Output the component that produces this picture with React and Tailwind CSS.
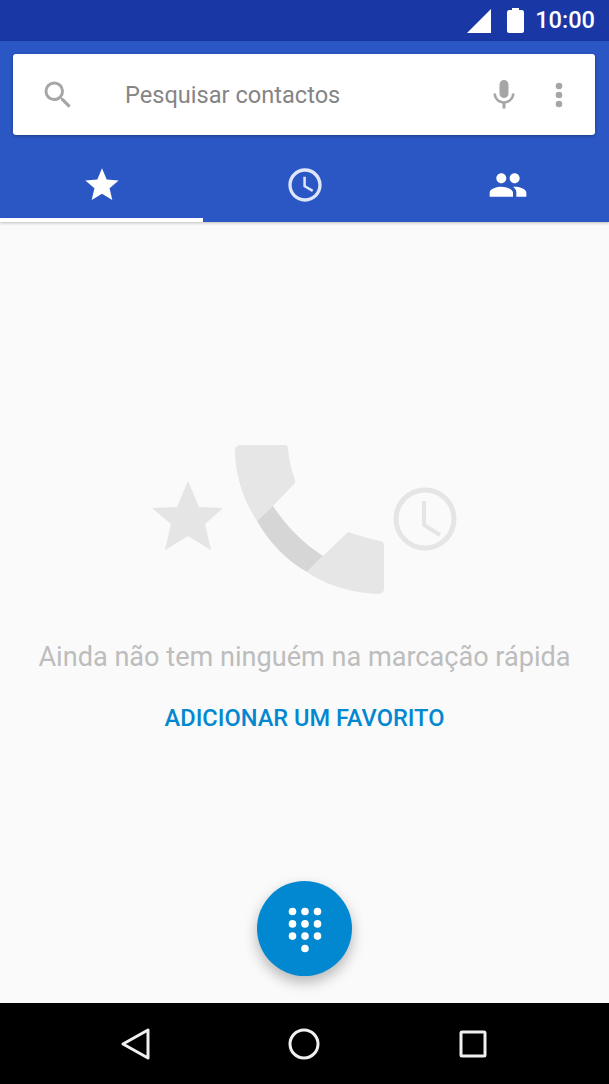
const font = { fontFamily: 'Roboto, sans-serif' };

function SearchBar() {
  return (
    <div className="ml-[13px] mr-[14px] mt-[13px] flex h-[81px] items-center rounded-[3px] bg-white shadow-[0_1px_3px_rgba(0,0,0,0.35)]">
      <svg className="ml-[27px] h-[36px] w-[36px] shrink-0" viewBox="0 0 24 24" fill="#a6a6a6">
        <path d="M15.5 14h-.79l-.28-.27A6.47 6.47 0 0 0 16 9.5 6.5 6.5 0 1 0 9.5 16c1.61 0 3.09-.59 4.23-1.57l.27.28v.79l5 4.99L20.49 19l-4.99-5zm-6 0C7.01 14 5 11.99 5 9.5S7.01 5 9.5 5 14 7.01 14 9.5 11.99 14 9.5 14z" />
      </svg>
      <span className="ml-[49px] pt-[3px] text-[23.6px] leading-none text-[#858585]">Pesquisar contactos</span>
      <svg className="ml-auto h-[36px] w-[36px] shrink-0" viewBox="0 0 24 24" fill="#a6a6a6">
        <path d="M12 14c1.66 0 2.99-1.34 2.99-3L15 5c0-1.66-1.34-3-3-3S9 3.34 9 5v6c0 1.66 1.34 3 3 3zm5.3-3c0 3-2.54 5.1-5.3 5.1S6.7 14 6.7 11H5c0 3.41 2.72 6.23 6 6.72V21h2v-3.28c3.28-.48 6-3.3 6-6.72h-1.7z" />
      </svg>
      <svg className="ml-[19px] mr-[18px] h-[36px] w-[36px] shrink-0" viewBox="0 0 24 24" fill="#a6a6a6">
        <circle cx="12" cy="6" r="2.2" />
        <circle cx="12" cy="12" r="2.2" />
        <circle cx="12" cy="18" r="2.2" />
      </svg>
    </div>
  );
}

function Tabs() {
  return (
    <div className="mt-[15px] flex h-[72px]">
      <div className="flex w-[203px] items-center justify-center border-b-4 border-white pt-[2px]">
        <svg className="h-[40px] w-[40px]" viewBox="0 0 24 24" fill="#fff">
          <path d="M12 17.27 18.18 21l-1.64-7.03L22 9.24l-7.19-.61L12 2 9.19 8.63 2 9.24l5.46 4.73L5.82 21z" />
        </svg>
      </div>
      <div className="flex flex-1 items-center justify-center pb-[2px]">
        <svg className="h-[40px] w-[40px]" viewBox="0 0 24 24" fill="#dfe6f7">
          <path d="M11.99 2C6.47 2 2 6.48 2 12s4.47 10 9.99 10C17.52 22 22 17.52 22 12S17.52 2 11.99 2zM12 20c-4.42 0-8-3.58-8-8s3.58-8 8-8 8 3.58 8 8-3.58 8-8 8zm.5-13H11v6l5.25 3.15.75-1.23-4.5-2.67z" />
        </svg>
      </div>
      <div className="flex w-[203px] items-center justify-center pb-[2px]">
        <svg className="h-[40px] w-[40px]" viewBox="0 0 24 24" fill="#fff">
          <path d="M16 11c1.66 0 2.99-1.34 2.99-3S17.66 5 16 5s-3 1.34-3 3 1.34 3 3 3zm-8 0c1.66 0 2.99-1.34 2.99-3S9.66 5 8 5 5 6.34 5 8s1.34 3 3 3zm0 2c-2.33 0-7 1.17-7 3.5V19h14v-2.5c0-2.33-4.67-3.5-7-3.5zm8 0c-.29 0-.62.02-.97.05 1.16.84 1.97 1.97 1.97 3.45V19h6v-2.5c0-2.33-4.67-3.5-7-3.5z" />
        </svg>
      </div>
    </div>
  );
}

// star + handset + clock, 310x150
function EmptyArt() {
  return (
    <svg className="mx-auto block h-[150px] w-[310px]" viewBox="150 445 310 150">
      <path d="M188 481l11 26 24 1-18 16 6 26-23-14-23 14 6-26-19-16 25-1z" fill="#e5e5e5" />
      <path d="M241 445h43c3 0 4 1 4 4 1 10 3 21 7 31 1 2 0 3-1 4l-21 22-16 15c-14-21-22-47-22-71 0-3 3-5 6-5z" fill="#e6e6e6" />
      <path d="M273 506c13 20 30 37 50 50l-16 16c-21-12-38-30-50-51z" fill="#d6d6d6" />
      <path d="M323 556l24-23c1-1 3-1 4 0 9 3 20 6 29 8 3 1 4 2 4 5v43c0 3-3 5-6 5-27-1-52-9-71-22z" fill="#e6e6e6" />
      <circle cx="425" cy="519" r="29" fill="none" stroke="#e5e5e5" strokeWidth="5" />
      <path d="M424 501v24l16 10" fill="none" stroke="#e5e5e5" strokeWidth="4" />
    </svg>
  );
}

function NavBar() {
  return (
    <div className="flex h-[81px] shrink-0 items-center justify-between bg-black pl-[120px] pr-[122px]">
      <svg className="h-[34px] w-[32px]" viewBox="0 0 32 34" fill="none" stroke="#f0f0f0" strokeWidth="3" strokeLinejoin="round">
        <path d="M28 3v28L3 17z" />
      </svg>
      <svg className="mr-[3px] h-[34px] w-[34px]" viewBox="0 0 34 34" fill="none" stroke="#f0f0f0" strokeWidth="3">
        <circle cx="17" cy="17" r="14" />
      </svg>
      <svg className="h-[28px] w-[28px]" viewBox="0 0 28 28" fill="none" stroke="#f0f0f0" strokeWidth="3" strokeLinejoin="round">
        <rect x="2" y="2" width="24" height="24" rx="1" />
      </svg>
    </div>
  );
}

export default function App() {
  return (
    <div className="flex h-[1084px] w-[609px] flex-col overflow-hidden bg-[#fafafa]" style={font}>
      <div className="flex h-[41px] shrink-0 items-center justify-end bg-[#1a37a6] pr-[14px]">
        <svg className="h-[24px] w-[24px]" viewBox="0 0 24 24" fill="#fff">
          <path d="M24 0v24H0z" />
        </svg>
        <svg className="ml-[16px] h-[25px] w-[17px]" viewBox="0 0 17 25" fill="#fff">
          <path d="M5 0h7v2h3c1 0 2 1 2 2v19c0 1-1 2-2 2H2c-1 0-2-1-2-2V4c0-1 1-2 2-2h3z" />
        </svg>
        <span className="ml-[11px] text-[23.6px] font-medium leading-none text-white">10:00</span>
      </div>

      <div className="relative z-10 shrink-0 bg-[#2b57c4] shadow-[0_1px_3px_rgba(0,0,0,0.25)]">
        <SearchBar />
        <Tabs />
      </div>

      <div className="relative flex-1 pt-[223px]">
        <EmptyArt />
        <p className="mt-[47px] text-center text-[27.1px] leading-[30px] text-[#bdbdbd]">
          Ainda não tem ninguém na marcação rápida
        </p>
        <p className="mt-[31px] text-center text-[23.6px] font-medium leading-[30px] text-[#0288d1]">
          ADICIONAR UM FAVORITO
        </p>
        <button className="absolute left-[257px] top-[659px] flex h-[95px] w-[95px] items-center justify-center rounded-full bg-[#0288d1] shadow-[0_6px_14px_rgba(0,0,0,0.28)]">
          <svg className="mt-[3px] h-[48px] w-[48px]" viewBox="0 0 48 48" fill="#fff">
            <circle cx="11.5" cy="5.5" r="3.8" />
            <circle cx="24" cy="5.5" r="3.8" />
            <circle cx="36.5" cy="5.5" r="3.8" />
            <circle cx="11.5" cy="17.9" r="3.8" />
            <circle cx="24" cy="17.9" r="3.8" />
            <circle cx="36.5" cy="17.9" r="3.8" />
            <circle cx="11.5" cy="30.1" r="3.8" />
            <circle cx="24" cy="30.1" r="3.8" />
            <circle cx="36.5" cy="30.1" r="3.8" />
            <circle cx="24" cy="42.5" r="3.8" />
          </svg>
        </button>
      </div>

      <NavBar />
    </div>
  );
}
